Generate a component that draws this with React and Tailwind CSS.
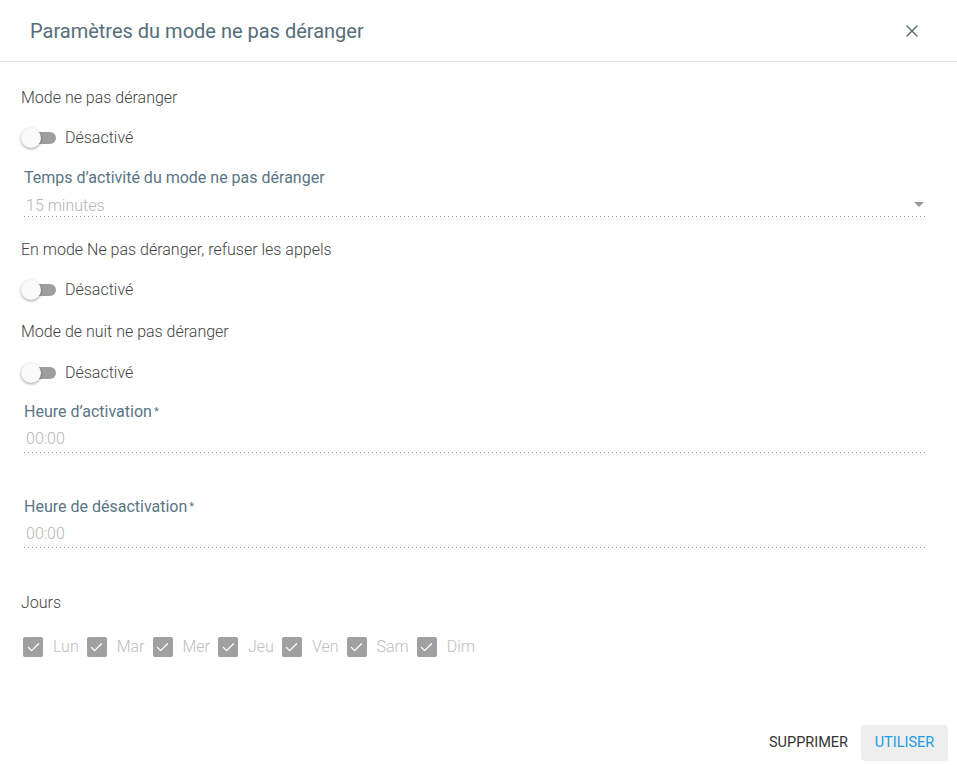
import { X, Check } from "lucide-react";

const days = ["Lun", "Mar", "Mer", "Jeu", "Ven", "Sam", "Dim"];

function Toggle() {
  return (
    <div className="flex h-5 items-center gap-2 pl-[21px]">
      <span className="relative inline-block h-5 w-[36px]">
        <span className="absolute left-[3px] top-[4px] h-3 w-8 rounded-full bg-[#9e9e9e]" />
        <span className="absolute left-0 top-0 h-5 w-5 rounded-full bg-[#fafafa] shadow-[0_1px_3px_rgba(0,0,0,0.4)]" />
      </span>
      <span className="text-base font-light leading-5 text-[#444]">Désactivé</span>
    </div>
  );
}

function Dots() {
  return (
    <div className="h-px w-full bg-[linear-gradient(to_right,#9a9a9a_1px,transparent_1px)] bg-[length:4px_1px] bg-repeat-x" />
  );
}

function Field({ label, value, required, select }) {
  return (
    <div className="pl-6 pr-[29px]">
      <p className="text-base leading-5 text-[#5a7585]">
        {label}
        {required && <span className="ml-0.5 align-top text-[11px]">*</span>}
      </p>
      <div className={"relative " + (select ? "mt-2" : "mt-[7px] pb-[3px]")}>
        <span className="block pl-0.5 text-base font-light leading-5 text-[#b5b5b5]">
          {value}
        </span>
        {select && (
          <span className="absolute right-1 top-[6px] h-0 w-0 border-x-[5px] border-t-[5px] border-x-transparent border-t-[#999]" />
        )}
      </div>
      <Dots />
    </div>
  );
}

function Heading({ children, className }) {
  return (
    <p className={"pl-[21px] text-base font-light leading-5 text-[#444] " + className}>
      {children}
    </p>
  );
}

export default function App() {
  return (
    <div
      className="flex h-[765px] w-[957px] flex-col bg-white"
      style={{ fontFamily: "Roboto, 'Liberation Sans', sans-serif" }}
    >
      <header className="flex h-[62px] shrink-0 items-center justify-between border-b border-[#e0e0e0] pl-[30px] pr-[35px]">
        <h1 className="text-[20px] text-[#546e7a]">
          Paramètres du mode ne pas déranger
        </h1>
        <X size={20} strokeWidth={1.6} className="text-[#546e7a]" />
      </header>

      <main className="flex-1">
        <Heading className="mt-[26px]">Mode ne pas déranger</Heading>
        <div className="mt-5">
          <Toggle />
        </div>
        <div className="mt-5">
          <Field label="Temps d’activité du mode ne pas déranger" value="15 minutes" select />
        </div>
        <Heading className="mt-[23px]">
          En mode Ne pas déranger, refuser les appels
        </Heading>
        <div className="mt-5">
          <Toggle />
        </div>
        <Heading className="mt-[22px]">Mode de nuit ne pas déranger</Heading>
        <div className="mt-[21px]">
          <Toggle />
        </div>
        <div className="mt-[19px]">
          <Field label="Heure d’activation" value="00:00" required />
        </div>
        <div className="mt-[44px]">
          <Field label="Heure de désactivation" value="00:00" required />
        </div>
        <Heading className="mt-[45px]">Jours</Heading>
        <div className="mt-[24px] flex items-center pl-[23px]">
          {days.map((d) => (
            <div key={d} className="mr-[8px] flex items-center gap-[10px]">
              <span className="flex h-5 w-5 items-center justify-center rounded-[2px] bg-[#a0a0a0]">
                <Check size={15} strokeWidth={2} className="text-white" />
              </span>
              <span className="text-base font-light leading-5 text-[#bdbdbd]">{d}</span>
            </div>
          ))}
        </div>
      </main>

      <footer className="flex items-center justify-end gap-[13px] pb-1 pr-[9px]">
        <button className="h-9 px-0 text-[14.5px] text-[#333]">SUPPRIMER</button>
        <button className="h-9 w-[87px] rounded-sm bg-[#eeeeee] text-[14.5px] text-[#1e9be6]">
          UTILISER
        </button>
      </footer>
    </div>
  );
}
